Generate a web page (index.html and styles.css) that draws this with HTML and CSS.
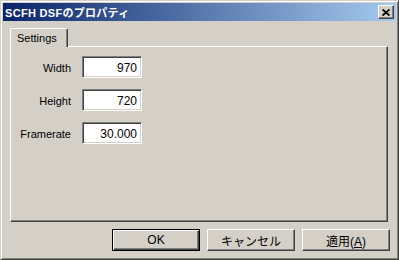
FILE: index.html
```html
<!DOCTYPE html>
<html lang="ja">
<head>
    <meta charset="UTF-8">
    <title>SCFH DSFのプロパティ</title>
    <link rel="stylesheet" href="styles.css">
</head>
<body>
    <div class="window">
        <div class="titlebar">
            <span class="title">SCFH DSFのプロパティ</span>
            <button class="close" aria-label="閉じる">
                <svg width="8" height="7" viewBox="0 0 8 7">
                    <path d="M0.5 0.5 L7.5 6.5 M7.5 0.5 L0.5 6.5" stroke="#000" stroke-width="1.8" fill="none"/>
                </svg>
            </button>
        </div>

        <div class="content">
            <!-- Tabs -->
            <div class="tabs">
                <div class="tab active">Settings</div>
            </div>

            <div class="panel">
                <div class="form">
                    <label for="width">Width</label>
                    <input type="text" id="width" value="970">
                    <label for="height">Height</label>
                    <input type="text" id="height" value="720">
                    <label for="framerate">Framerate</label>
                    <input type="text" id="framerate" value="30.000">
                </div>
            </div>

            <!-- Dialog buttons -->
            <div class="buttons">
                <button class="btn default">OK</button>
                <button class="btn">キャンセル</button>
                <button class="btn">適用(<u>A</u>)</button>
            </div>
        </div>
    </div>
</body>
</html>
```

FILE: styles.css
```css
body {
    margin: 0;
    padding: 0;
    background-color: #d4d0c8;
    font-family: "Liberation Sans", "Noto Sans CJK JP", sans-serif;
    font-size: 11px;
    color: #000;
}
.window {
    width: 399px;
    height: 260px;
    box-sizing: border-box;
    padding: 2px;
    background-color: #d4d0c8;
    border: 1px solid;
    border-color: #d4d0c8 #404040 #404040 #d4d0c8;
    box-shadow: inset 1px 1px #fff, inset -1px -1px #808080;
}
.titlebar {
    height: 18px;
    display: flex;
    align-items: center;
    justify-content: space-between;
    padding-left: 2px;
    background: linear-gradient(to right, #0a246a, #a6caf0);
}
.title {
    color: #fff;
    font-weight: bold;
    font-size: 11px;
    letter-spacing: 0.3px;
}
.close {
    width: 16px;
    height: 14px;
    margin-right: 2px;
    padding: 0;
    display: flex;
    align-items: center;
    justify-content: center;
    background-color: #d4d0c8;
    border: 1px solid;
    border-color: #fff #404040 #404040 #fff;
    box-shadow: inset -1px -1px #808080;
}
.content {
    padding: 7px 8px 0 7px;
}
.tabs {
    display: flex;
    height: 18px;
}
.tab {
    position: relative;
    z-index: 1;
    width: 58px;
    height: 19px;
    box-sizing: border-box;
    padding: 3px 0 0 6px;
    background-color: #d4d0c8;
    border: 1px solid;
    border-bottom: none;
    border-color: #fff #404040 #404040 #fff;
    border-radius: 2px 2px 0 0;
    box-shadow: inset -1px 0 #808080;
}
.panel {
    height: 176px;
    box-sizing: border-box;
    border: 1px solid;
    border-color: #fff #404040 #404040 #fff;
    box-shadow: inset -1px -1px #808080;
    padding-top: 9px;
}
.form {
    display: grid;
    grid-template-columns: 60px 60px;
    column-gap: 11px;
    row-gap: 11px;
}
.form label {
    text-align: right;
    align-self: center;
    padding-top: 2px;
}
.form input {
    width: 60px;
    height: 22px;
    box-sizing: border-box;
    margin: 0;
    padding: 2px 4px 0 0;
    text-align: right;
    font-family: "Liberation Sans", sans-serif;
    font-size: 12px;
    background-color: #fff;
    border: 1px solid;
    border-color: #808080 #fff #fff #808080;
    box-shadow: inset 1px 1px #404040, inset -1px -1px #d4d0c8;
    outline: none;
}
.buttons {
    display: flex;
    justify-content: flex-end;
    gap: 7px;
    margin-top: 7px;
    margin-right: -2px;
}
.btn {
    width: 88px;
    height: 22px;
    padding: 0;
    font-family: "Liberation Sans", "Noto Sans CJK JP", sans-serif;
    font-size: 12px;
    color: #000;
    background-color: #d4d0c8;
    border: 1px solid;
    border-color: #fff #404040 #404040 #fff;
    box-shadow: inset -1px -1px #808080;
}
.btn.default {
    border-color: #000;
    box-shadow: inset 1px 1px #fff, inset -1px -1px #404040, inset -2px -2px #808080;
}
```
